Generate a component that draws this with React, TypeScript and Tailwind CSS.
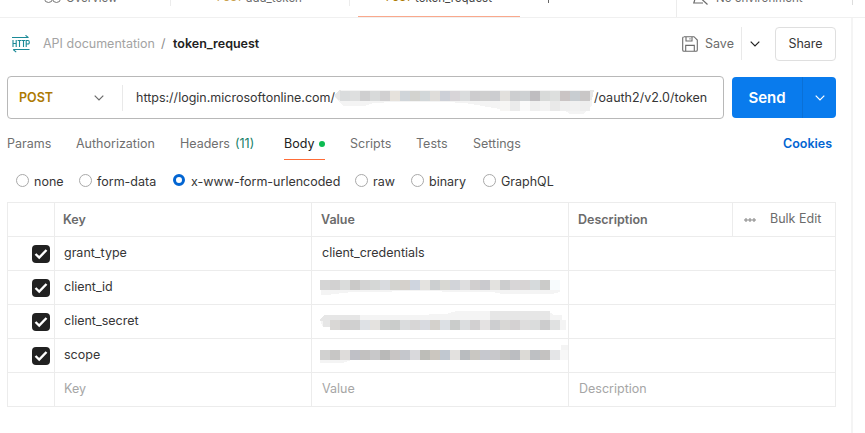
import type { ReactNode } from "react";

const Chevron = ({ color }: { color: string }) => (
  <svg width="10" height="6" viewBox="0 0 10 6" fill="none" stroke={color} strokeWidth="1.2" className="shrink-0">
    <path d="M.7.7 5 5 9.3.7" />
  </svg>
);

const Check = () => (
  <div className="flex h-[18px] w-[18px] items-center justify-center rounded-[4px] bg-[#212121]">
    <svg width="14" height="12" viewBox="0 0 14 12" fill="none" stroke="#fff" strokeWidth="2.4">
      <path d="M1.5 6 5.2 9.6 12.5 2" />
    </svg>
  </div>
);

type Strip = { x: number; y: number; colors: string[] };

const Mosaic = ({ strips, w, shade, shade2 }: { strips: Strip[]; w: number; shade: string; shade2?: string }) => (
  <svg width={w} height="33" viewBox={`0 0 ${w} 33`} className="block shrink-0" shapeRendering="crispEdges">
    <path d={shade} fill="#f4f4f4" />
    {shade2 && <path d={shade2} fill="#e6e6e6" />}
    {strips.map((s) =>
      s.colors.map((c, i) => <rect key={`${s.y}-${i}`} x={s.x + i * 10} y={s.y} width="10" height="10" fill={c} />),
    )}
  </svg>
);

const idColors = ["#d5d5d5", "#d2d1d1", "#dadcdb", "#cac9c8", "#d3d3d3", "#d5d7d6", "#d9dbdf", "#d3d3cf", "#d5d1cc", "#cfd5df", "#e4e3e0", "#cccfd0", "#d8d8d3", "#d2d4d9", "#dededf", "#d1cfcf", "#cacace", "#e3e2df", "#cccdce", "#d8d6d7", "#d7d4d4", "#d6dadc", "#cbcbc9", "#f7fbfd"];
const secretColors = ["#d9d7d5", "#d0cfcf", "#d0d0d0", "#dee1e5", "#e4e2df", "#cdcfce", "#cacccb", "#dadcdd", "#d7d6d6", "#d8dae0", "#d4d1cc", "#dce0e4", "#cacccb", "#dbdddf", "#d2d0d1", "#e4e2e2", "#cdced0", "#d8d7d5", "#d4d1d2", "#dedddd", "#dadcdc", "#cccccd", "#e0e1e1"];
const scopeColors = ["#d1d1d0", "#c7c6c5", "#dedcda", "#bfc0c6", "#c2c1c0", "#c8c8c9", "#b9b9b8", "#c8c5c4", "#c5c7cc", "#d9d9dc", "#bdbdb8", "#cbc6bf", "#c1c8d0", "#e3e1df", "#b9bcbf", "#c9c7c2", "#c6c8ce", "#c8c8cb", "#c2c2c1", "#bbbdc1", "#dcdad6", "#bec0c3", "#c4c2c1", "#e4e5e7", "#f7f7f7"];
const urlColors = ["#dadcdd", "#dedfdf", "#cfcfd0", "#d8dada", "#d1d0d1", "#e6e2dc", "#d0d5d9", "#d3d3cf", "#d2d7d9", "#dfddda", "#cdd0d7", "#d8d5d8", "#dadcdd", "#cdccce", "#cfcfcf", "#cccdd0", "#e2e0dd", "#cdced0", "#ced1d3", "#bfbdc0", "#d8dad9", "#dddfde", "#cac4c4", "#c8cdd1", "#c9c7c7"];
const urlLow = ["#f7f6f4", "#ebebeb", "#fafafa", "#efefef", "#f3f3f3", "#e9e9e9", "#efefef", "#f1f1f1", "#eeeeee"];

const Tab = ({ w, children }: { w: string; children: ReactNode }) => (
  <div className={`flex h-[34px] shrink-0 items-center pt-[2px] text-[#6f6f6f] ${w}`}>{children}</div>
);

const Radio = ({ label, on, w, gap = "pl-[5px]" }: { label: string; on?: boolean; w: string; gap?: string }) => (
  <div className={`flex shrink-0 items-center ${w}`}>
    <span
      className={`mt-[-2px] shrink-0 rounded-full ${on ? "h-[12px] w-[12px] border-[3px] border-[#0265d2]" : "h-[13px] w-[13px] border border-[#a9a9a9]"}`}
    />
    <span className={`pt-px ${gap}`}>{label}</span>
  </div>
);

const rows: { k: string; v: ReactNode }[] = [
  { k: "grant_type", v: <span className="pb-[2px] pl-[10px]">client_credentials</span> },
  {
    k: "client_id",
    v: <Mosaic w={257} shade="M8 12H248V21L240 23H190L180 21H130V20H90L70 21H40L15 24H9Z" strips={[{ x: 8, y: 9, colors: idColors }]} />,
  },
  {
    k: "client_secret",
    v: <Mosaic w={257} shade="M8 15L14 10H100L134 9L145 6H236L242 10H250V15H254V25H28V22H11Z" shade2="M8 15L12 10H48V16H28V22H11V16H8ZM178 6H238V17H178Z" strips={[{ x: 18, y: 15, colors: secretColors }]} />,
  },
  {
    k: "scope",
    v: <Mosaic w={257} shade="M8 14L20 11H249V6H257V21H40L30 24H8Z" strips={[{ x: 8, y: 11, colors: scopeColors }]} />,
  },
];

const line = "border-[#ececec]";

export default function App() {
  return (
    <div className="h-[433px] w-[865px] overflow-hidden bg-white font-['Inter',sans-serif] text-[12.5px] leading-[16px] whitespace-nowrap text-[#363636]">
      <div className="flex h-[18px] items-start overflow-hidden border-b border-[#f0f0f0] text-[11.5px] text-[#6b6b6b]">
        <div className="flex h-[17px] w-[170px] shrink-0 items-start pl-[44px]">
          <svg width="18" height="12" viewBox="0 0 18 12" fill="none" stroke="#777" className="mt-[-8px]">
            <circle cx="4.5" cy="6.5" r="4" />
            <circle cx="12.5" cy="6.5" r="4" />
          </svg>
          <span className="mt-[-10px] pl-[4px]">Overview</span>
        </div>
        <div className="flex h-[6px] w-[180px] shrink-0 border-x border-[#ececec] pl-[46px]">
          <span className="mt-[-10px] w-[29px] text-[9.5px] font-medium text-[#c9a04e]">POST</span>
          <span className="mt-[-10px]">add_token</span>
        </div>
        <div className="ml-[8px] flex h-[18px] w-[162px] shrink-0 border-b-2 border-[#f9a88c] pl-[28px] text-[#444]">
          <span className="mt-[-10px] w-[29px] text-[9.5px] font-medium text-[#ad7a03]">POST</span>
          <span className="mt-[-10px]">token_request</span>
        </div>
        <div className="ml-[28px] h-[3px] w-px shrink-0 bg-[#666]" />
        <div className="ml-[127px] flex h-[17px] w-[176px] shrink-0 border-l border-[#ececec] pl-[16px]">
          <svg width="16" height="12" viewBox="0 0 16 12" fill="none" stroke="#6b6b6b" strokeWidth="1.2" className="mt-[-7px]">
            <path d="M2 0V6L.8 10H10M8 5.5 14.5 11.5" />
          </svg>
          <span className="mt-[-10px] pl-[7px]">No environment</span>
        </div>
        <div className="h-[5px] w-px bg-[#ddd]" />
      </div>

      <div className="h-[415px] w-[853px] border-r-2 border-[#f4f4f4]">
        <div className="flex h-[51px] items-center pl-[12px]">
          <svg width="18" height="18" viewBox="0 0 18 18" fill="none" stroke="#1b8a97" strokeWidth="1.1" className="shrink-0">
            <path d="M0 2.5H16.5M13.5.3 16.5 2.6M17.5 14.5H1.2M1.2 14.5 4.2 17.2" />
            <path d="M1 5V12M4.2 5V12M1 8.5H4.2M5.6 5.5H9.4M7.5 5.5V12M9.8 5.5H13.2M11.5 5.5V12M14.2 12V5.5H16Q17.3 5.5 17.3 7.3T16 9H14.2" />
          </svg>
          <span className="w-[119px] shrink-0 pt-px pl-[13px] text-[#a3a3a3]">API documentation</span>
          <span className="w-[24px] shrink-0 pt-px pl-[12px] text-[#8a8a8a]">/</span>
          <span className="w-[509px] shrink-0 pt-px font-semibold text-[#212121]">token_request</span>
          <svg width="16" height="16" viewBox="0 0 16 16" fill="none" stroke="#6b6b6b" strokeWidth="1.1" className="shrink-0">
            <path d="M1.9.7H12L15.3 4V14Q15.3 15.3 14 15.3H2Q.7 15.3.7 14V2Q.7.7 2 .7ZM4 .7V5H10V.7M3.7 15V9.4H12.3V15M8 2.2V3.5" />
          </svg>
          <span className="w-[43px] shrink-0 pl-[7px] text-[#6b6b6b]">Save</span>
          <div className="flex h-[33px] w-[34px] shrink-0 items-center border-l border-[#e9e9e9] pl-[8px]">
            <Chevron color="#212121" />
          </div>
          <div className="flex h-[34px] w-[61px] shrink-0 items-center justify-center rounded-[4px] border border-[#dfdfdf]">Share</div>
        </div>

        <div className="mt-[7px] flex h-[43px] gap-[8px] pl-[7px]">
          <div className="flex w-[717px] shrink-0 items-center rounded-[4px] border border-[#b8b8b8]">
            <span className="w-[86px] shrink-0 pt-px pl-[11px] font-semibold text-[#ad7a03]">POST</span>
            <Chevron color="#6b6b6b" />
            <div className="ml-[18px] h-[26px] w-px shrink-0 bg-[#e9e9e9]" />
            <span className="w-[212px] shrink-0 pl-[13px]">https://login.microsoftonline.com/</span>
            <Mosaic
              w={260}
              shade="M0 13L4 9H257V25L247 34H237L227 28L212 28H165L130 22L110 21H60L38 22L30 25H8L0 16Z"
              shade2="M0 14L4 9H6V19H3L0 16ZM255 9H259L257 19H255Z"
              strips={[{ x: 5, y: 10, colors: urlColors }, { x: 165, y: 20, colors: urlLow }]}
            />
            <span className="ml-[-1px]">/oauth2/v2.0/token</span>
          </div>
          <div className="mt-[1px] flex h-[41px] w-[104px] shrink-0 items-center rounded-[4px] bg-[#097bed] text-white">
            <span className="flex h-full w-[71px] items-center justify-center border-r border-[#0a70d6] pt-px text-[15px] font-semibold">Send</span>
            <div className="flex flex-1 justify-center"><Chevron color="#fff" /></div>
          </div>
        </div>

        <div className="mt-[7px] flex h-[34px] pl-[7px]">
          <Tab w="w-[69px]">Params</Tab>
          <Tab w="w-[104px]">Authorization</Tab>
          <Tab w="w-[104px]">Headers<span className="pl-[5px] text-[#158068]">(11)</span></Tab>
          <div className="mr-[25px] flex h-[34px] w-[41px] shrink-0 flex-col text-[#212121]">
            <div className="flex h-[33px] shrink-0 items-center pt-[3px]">
              Body<span className="ml-[5px] h-[6px] w-[6px] shrink-0 rounded-full bg-[#0cbb52]" />
            </div>
            <div className="h-px shrink-0 bg-[#ff6c37]" />
          </div>
          <Tab w="w-[66px]">Scripts</Tab>
          <Tab w="w-[57px]">Tests</Tab>
          <Tab w="w-[310px]">Settings</Tab>
          <span className="flex items-center pt-[2px] font-semibold text-[#0265d2]">Cookies</span>
        </div>

        <div className="flex h-[42px] items-center pl-[16px]">
          <Radio label="none" w="w-[63px]" />
          <Radio label="form-data" w="w-[94px]" />
          <Radio label="x-www-form-urlencoded" on w="w-[182px]" gap="pl-[6px]" />
          <Radio label="raw" w="w-[56px]" />
          <Radio label="binary" w="w-[72px]" />
          <Radio label="GraphQL" w="w-[80px]" />
        </div>

        <div className={`ml-[7px] grid w-[829px] grid-cols-[47px_257px_257px_267px] grid-rows-[34px_34px_34px_34px_34px_34px] border-t border-l ${line}`}>
          <div className={`border-r border-b ${line}`} />
          <div className={`flex items-center border-r border-b pl-[8px] font-semibold text-[#6b6b6b] ${line}`}>Key</div>
          <div className={`flex items-center border-r border-b pl-[9px] font-semibold text-[#6b6b6b] ${line}`}>Value</div>
          <div className={`flex items-center border-r border-b pl-[9px] text-[#6b6b6b] ${line}`}>
            <span className="w-[154px] shrink-0 font-semibold">Description</span>
            <div className={`flex h-full items-center border-l pl-[11px] ${line}`}>
              <svg width="12" height="4" viewBox="0 0 12 4" fill="none" stroke="#6b6b6b" strokeWidth=".9">
                <circle cx="2" cy="2" r="1.2" />
                <circle cx="6" cy="2" r="1.2" />
                <circle cx="10" cy="2" r="1.2" />
              </svg>
              <span className="pb-px pl-[14px]">Bulk Edit</span>
            </div>
          </div>
          {rows.map((r) => (
            <div key={r.k} className="contents">
              <div className={`flex items-center justify-end border-r border-b pr-[4px] ${line}`}><Check /></div>
              <div className={`flex items-center border-r border-b pb-px pl-[9px] ${line}`}>{r.k}</div>
              <div className={`flex items-center overflow-hidden border-r border-b ${line}`}>{r.v}</div>
              <div className={`border-r border-b ${line}`} />
            </div>
          ))}
          <div className={`border-r border-b ${line}`} />
          <div className={`flex items-center border-r border-b pb-[2px] pl-[9px] text-[#a6a6a6] ${line}`}>Key</div>
          <div className={`flex items-center border-r border-b pb-[2px] pl-[10px] text-[#a6a6a6] ${line}`}>Value</div>
          <div className={`flex items-center border-r border-b pb-[2px] pl-[10px] text-[#a6a6a6] ${line}`}>Description</div>
        </div>
      </div>
    </div>
  );
}
